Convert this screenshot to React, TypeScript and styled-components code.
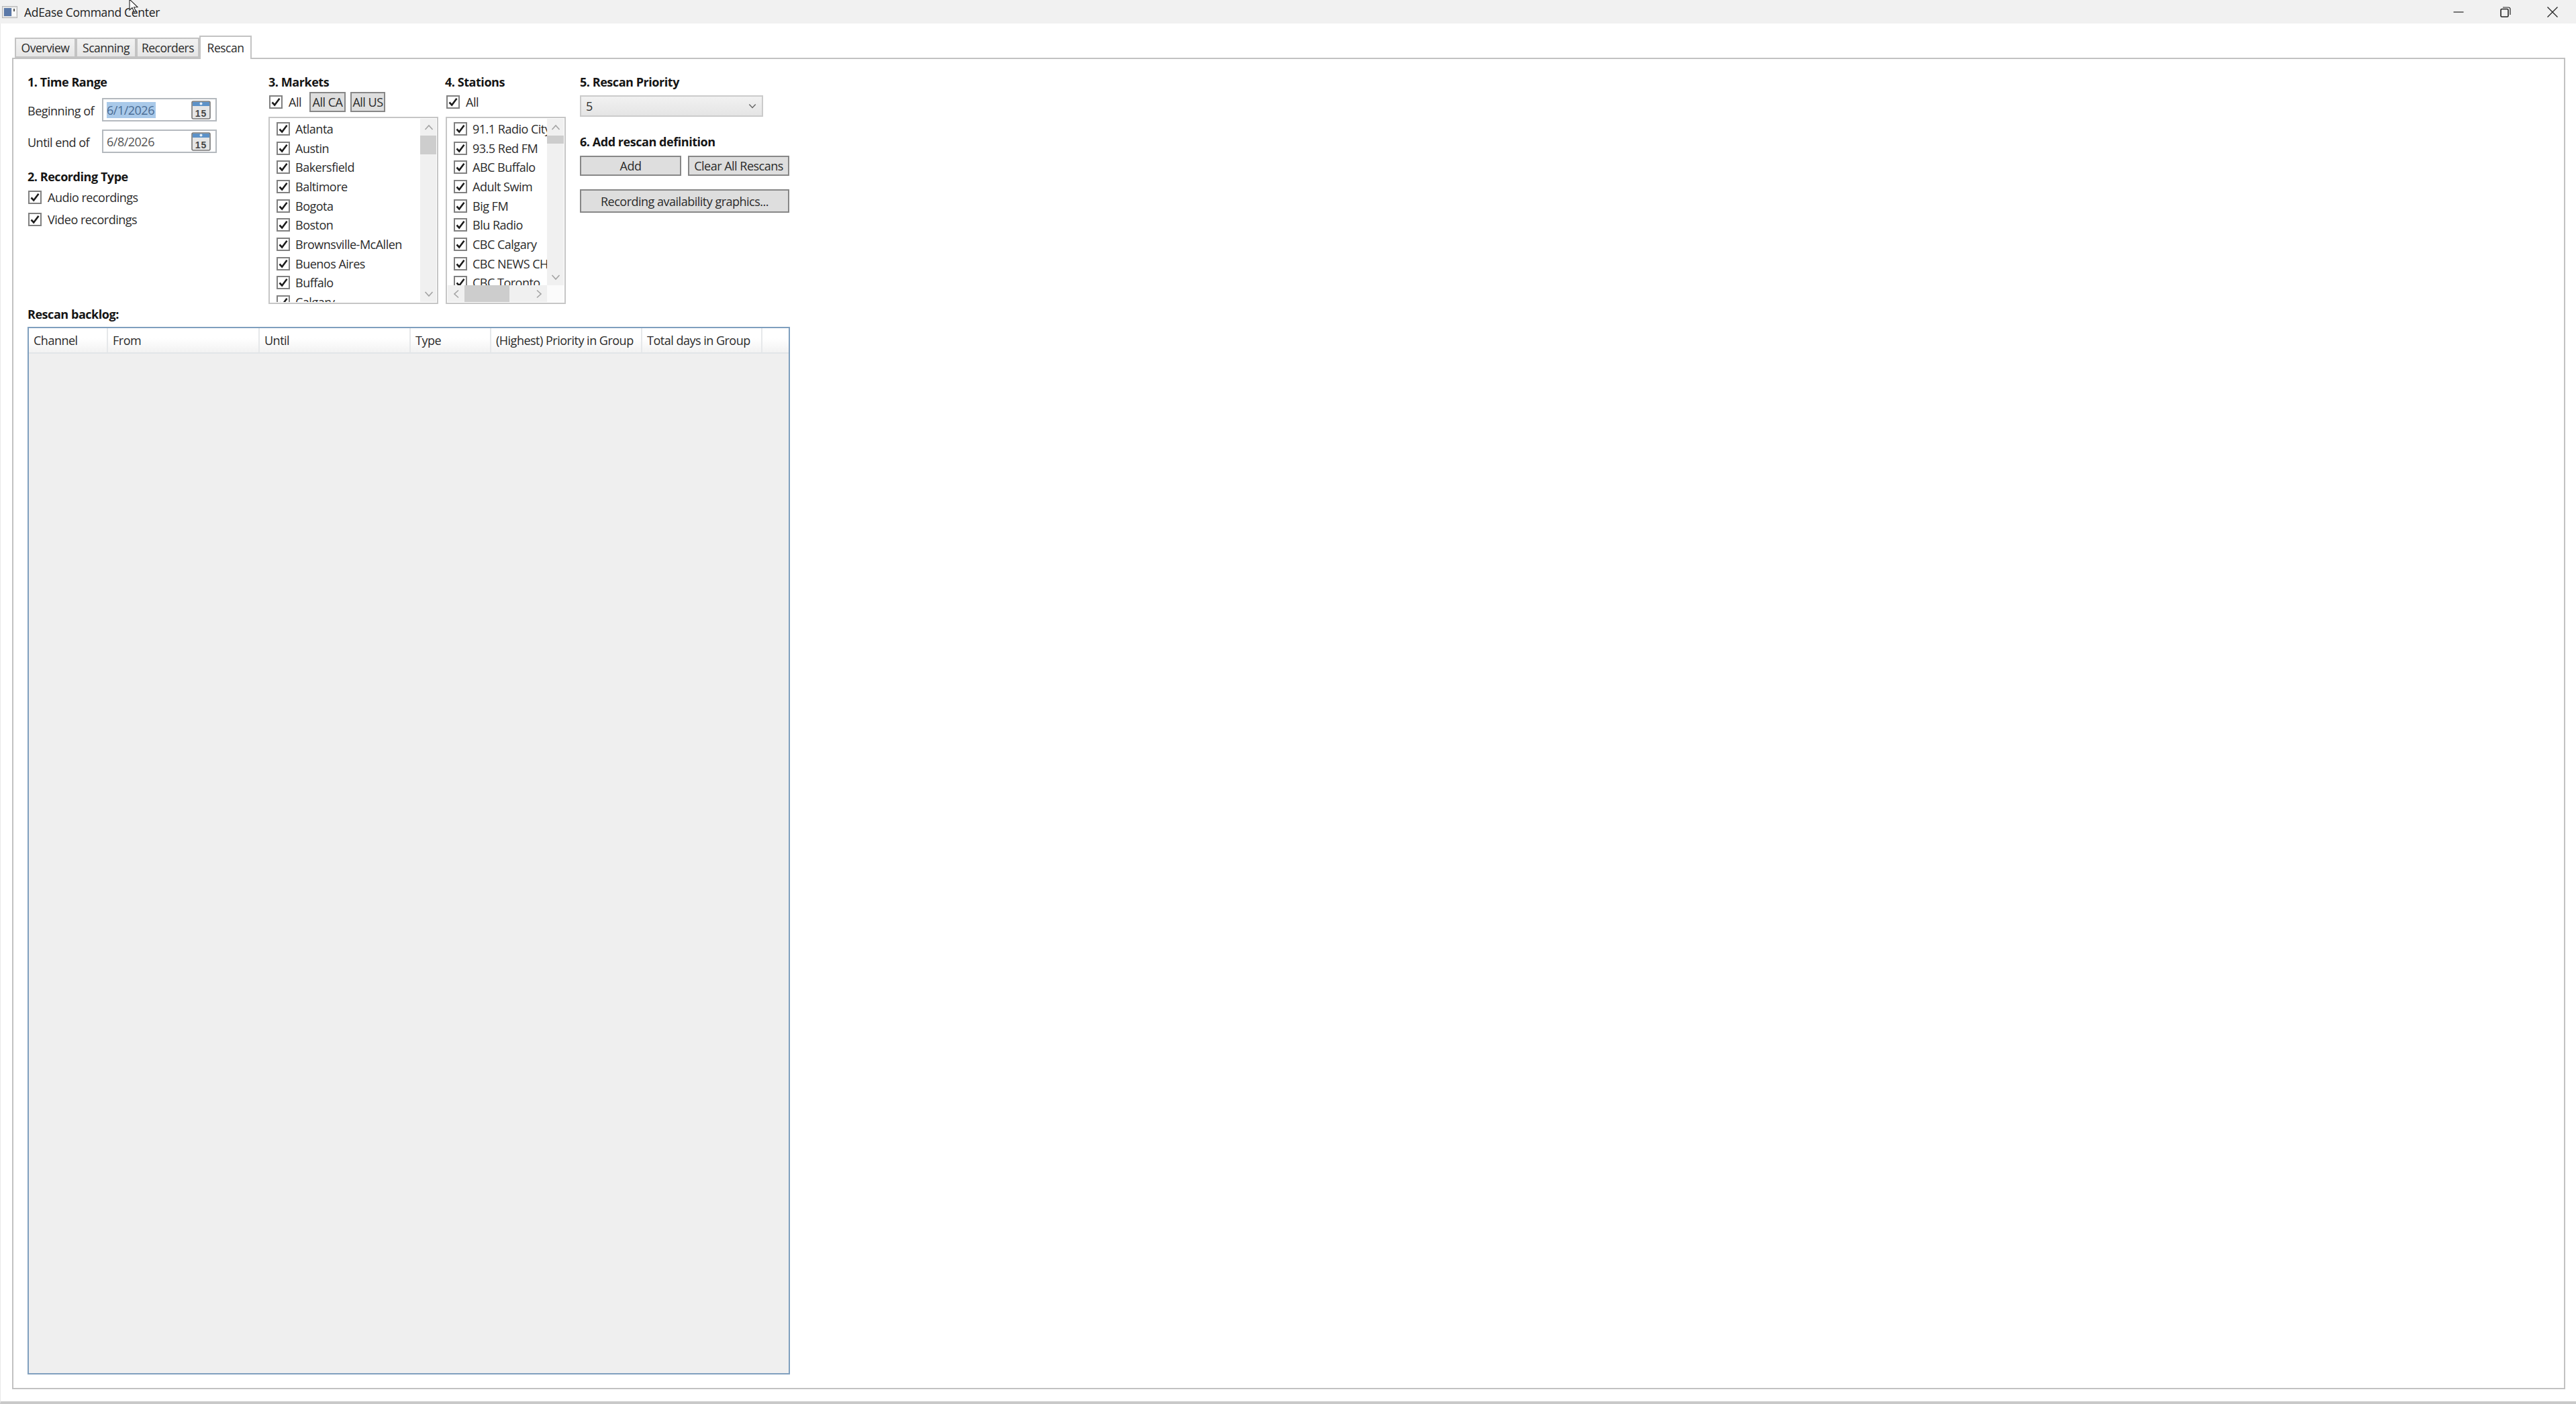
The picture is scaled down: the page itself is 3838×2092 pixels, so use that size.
import styled, { createGlobalStyle } from 'styled-components'

const GlobalStyle = createGlobalStyle`
    html, body {
        margin: 0;
        padding: 0;
        background: #fff;
    }
    * {
        box-sizing: border-box;
    }
`

const Window = styled.div`
    position: relative;
    width: 3838px;
    height: 2092px;
    display: flex;
    flex-direction: column;
    overflow: hidden;
    background: #fff;
    color: #2b2b2b;
    font-family: 'Open Sans', 'Noto Sans', sans-serif;
    font-size: 18px;
    letter-spacing: -0.5px;
`

const TitleBar = styled.div`
    height: 35px;
    flex: none;
    display: flex;
    align-items: center;
    padding-left: 3px;
    background: #f1f1f1;
    font-size: 17.5px;
    letter-spacing: -0.3px;
    color: #1c1c1c;
`

const TitleText = styled.span`
    margin-left: 10px;
    flex: 1;
`

const WindowButton = styled.div`
    width: 70px;
    height: 35px;
    display: flex;
    align-items: center;
    justify-content: center;
`

const Cursor = styled.svg`
    position: absolute;
    left: 192px;
    top: -2px;
`

const Body = styled.div`
    flex: 1;
    display: flex;
    flex-direction: column;
    padding: 18px 16px 18px 17px;
    border-left: 1px solid #e9e9e9;
    border-bottom: 4px solid #c9c9c9;
`

const TabStrip = styled.div`
    display: flex;
    align-items: flex-end;
    height: 33px;
    flex: none;
    padding-left: 4px;
    position: relative;
    z-index: 1;
`

const Tab = styled.div<{ $w: number; $active?: boolean }>`
    width: ${(p) => p.$w}px;
    height: ${(p) => (p.$active ? 35 : 30)}px;
    margin-bottom: ${(p) => (p.$active ? -2 : 0)}px;
    display: flex;
    align-items: center;
    justify-content: center;
    padding-bottom: ${(p) => (p.$active ? 2 : 0)}px;
    background: ${(p) => (p.$active ? '#fff' : 'linear-gradient(#f2f2f2, #e6e6e6)')};
    border: 2px solid #c3c3c3;
    border-bottom: ${(p) => (p.$active ? 'none' : '2px solid #c3c3c3')};
    font-size: 17.5px;
`

const Panel = styled.div`
    flex: 1;
    min-height: 0;
    display: flex;
    flex-direction: column;
    padding: 22px 0 0 21px;
    border: 2px solid #c2c2c2;
`

const TopRow = styled.div`
    display: flex;
    height: 346px;
    flex: none;
`

const Column = styled.div<{ $w: number }>`
    width: ${(p) => p.$w}px;
    flex: none;
    display: flex;
    flex-direction: column;
`

const Heading = styled.div<{ $mt?: number }>`
    height: 24px;
    line-height: 24px;
    margin-top: ${(p) => p.$mt ?? 0}px;
    font-size: 18px;
    font-weight: 700;
    letter-spacing: -0.45px;
    color: #151515;
    white-space: nowrap;
`

const DateRow = styled.div`
    display: flex;
    align-items: center;
    height: 35px;
    margin-top: 12px;
`

const DateLabel = styled.span`
    width: 111px;
    flex: none;
    padding-top: 2px;
`

const DateBox = styled.div`
    width: 171px;
    height: 35px;
    display: flex;
    align-items: center;
    justify-content: space-between;
    padding: 0 7px 0 5px;
    border: 2px solid #b4b9be;
    color: #555;
`

const DateValue = styled.span<{ $selected?: boolean }>`
    width: 73px;
    height: 24px;
    line-height: 24px;
    white-space: nowrap;
    background: ${(p) => (p.$selected ? '#a9c9e9' : 'transparent')};
    color: ${(p) => (p.$selected ? '#4a6c94' : '#555')};
`

const CheckRow = styled.div<{ $h: number; $pl?: number; $mt?: number }>`
    display: flex;
    align-items: center;
    gap: 9px;
    height: ${(p) => p.$h}px;
    margin-top: ${(p) => p.$mt ?? 0}px;
    padding-left: ${(p) => p.$pl ?? 0}px;
    white-space: nowrap;
`

const CheckBox = styled.span`
    width: 20px;
    height: 20px;
    flex: none;
    display: flex;
    align-items: center;
    justify-content: center;
    background: #fff;
    border: 2px solid #808080;
`

const AllLabel = styled.span`
    width: 31px;
    flex: none;
`

const SmallButton = styled.div<{ $w: number }>`
    width: ${(p) => p.$w}px;
    height: 30px;
    margin-right: 7px;
    flex: none;
    display: flex;
    align-items: center;
    justify-content: center;
    background: #dedede;
    border: 2px solid #878787;
    white-space: nowrap;
`

const ControlRow = styled.div`
    display: flex;
    height: 30px;
    margin-top: 3px;
    padding-left: 1px;
    align-items: center;
    gap: 0;
`

const ListBox = styled.div<{ $w: number; $ml?: number }>`
    width: ${(p) => p.$w}px;
    height: 279px;
    margin-top: 7px;
    margin-left: ${(p) => p.$ml ?? 0}px;
    padding: 1px;
    display: grid;
    border: 2px solid #c6c6c6;
    background: #fff;
`

const MarketGrid = styled(ListBox)`
    grid-template-columns: 1fr 24px;
    grid-template-rows: 1fr;
`

const StationGrid = styled(ListBox)`
    grid-template-columns: 1fr 25px;
    grid-template-rows: 1fr 25px;
`

const ListView = styled.div`
    min-width: 0;
    min-height: 0;
    overflow: hidden;
    padding: 0.65px 0 0 9px;
`

const ListRow = styled.div`
    display: flex;
    align-items: center;
    gap: 8px;
    height: 28.7px;
    white-space: nowrap;
`

const VScroll = styled.div`
    display: flex;
    flex-direction: column;
    background: #f0f0f0;
    min-height: 0;
`

const HScroll = styled.div`
    display: flex;
    background: #f0f0f0;
`

const ArrowCell = styled.div`
    width: 25px;
    height: 25px;
    flex: none;
    display: flex;
    align-items: center;
    justify-content: center;
`

const VThumb = styled.div<{ $h: number }>`
    height: ${(p) => p.$h}px;
    flex: none;
    background: #cdcdcd;
`

const HThumb = styled.div`
    width: 67px;
    height: 25px;
    flex: none;
    background: #cdcdcd;
`

const Spacer = styled.div`
    flex: 1;
`

const Corner = styled.div`
    background: #fbfbfb;
`

const Combo = styled.div`
    width: 273px;
    height: 32px;
    margin-top: 8px;
    display: flex;
    align-items: center;
    justify-content: space-between;
    padding: 0 8px 0 7px;
    background: linear-gradient(#f1f1f1, #e5e5e5);
    border: 2px solid #cbcbcb;
`

const ButtonRow = styled.div`
    display: flex;
    gap: 10px;
    margin-top: 9px;
`

const ActionButton = styled.div<{ $w: number; $h: number; $mt?: number }>`
    width: ${(p) => p.$w}px;
    height: ${(p) => p.$h}px;
    margin-top: ${(p) => p.$mt ?? 0}px;
    display: flex;
    align-items: center;
    justify-content: center;
    background: #dedede;
    border: 2px solid #878787;
    white-space: nowrap;
`

const DataGrid = styled.div`
    width: 1136px;
    height: 1561px;
    margin-top: 7px;
    flex: none;
    display: flex;
    flex-direction: column;
    background: #efefef;
    border: 2px solid #7f9fbe;
`

const HeaderRow = styled.div`
    height: 38px;
    flex: none;
    display: flex;
    background: linear-gradient(#ffffff 40%, #f2f2f2);
    border-bottom: 2px solid #e2e5e8;
`

const HeaderCell = styled.div<{ $w?: number }>`
    width: ${(p) => (p.$w ? `${p.$w}px` : 'auto')};
    flex: ${(p) => (p.$w ? 'none' : '1')};
    display: flex;
    align-items: center;
    padding-left: 7px;
    border-right: ${(p) => (p.$w ? '2px solid #e6e8ea' : 'none')};
    white-space: nowrap;
`

const Check = () => (
    <CheckBox>
        <svg width="16" height="16" viewBox="0 0 16 16">
            <path d="M2.5 8.5 L6.2 12.5 L13.5 2.8" fill="none" stroke="#1c1c1c" strokeWidth="2.6" />
        </svg>
    </CheckBox>
)

const Chevron = ({ dir, color = '#a3a3a3', size = 14 }: { dir: 'up' | 'down' | 'left' | 'right'; color?: string; size?: number }) => {
    const rotate = { up: 0, right: 90, down: 180, left: 270 }[dir]
    return (
        <svg width={size} height={size} viewBox="0 0 14 14" style={{ transform: `rotate(${rotate}deg)` }}>
            <path d="M1.5 10 L7 4 L12.5 10" fill="none" stroke={color} strokeWidth="1.6" />
        </svg>
    )
}

const AppIcon = () => (
    <svg width="23" height="18" viewBox="0 0 23 18">
        <rect x="0.5" y="0.5" width="22" height="17" fill="#e4e4e4" stroke="#b5b5b5" />
        <rect x="3" y="3" width="11" height="12" fill="#5a78a8" />
        <rect x="15" y="3" width="6" height="12" fill="#fafafa" />
        <rect x="17" y="4" width="2" height="4" fill="#555" />
    </svg>
)

const CalendarIcon = () => (
    <svg width="29" height="28" viewBox="0 0 29 28">
        <rect x="1" y="1" width="27" height="26" rx="2" fill="#e6e6e6" stroke="#777" strokeWidth="1.6" />
        <rect x="2" y="2" width="25" height="6" fill="#5d92c8" />
        <circle cx="14.5" cy="4.5" r="2" fill="#e8f0f8" />
        <text x="14.5" y="24" textAnchor="middle" fontFamily="'Liberation Sans', sans-serif" fontSize="14" fontWeight="700" fill="#444" letterSpacing="1">
            15
        </text>
    </svg>
)

const markets = ['Atlanta', 'Austin', 'Bakersfield', 'Baltimore', 'Bogota', 'Boston', 'Brownsville-McAllen', 'Buenos Aires', 'Buffalo', 'Calgary']
const stations = ['91.1 Radio City', '93.5 Red FM', 'ABC Buffalo', 'Adult Swim', 'Big FM', 'Blu Radio', 'CBC Calgary', 'CBC NEWS CH', 'CBC Toronto', 'CBC Vancouver']

const columns: { title: string; w?: number }[] = [
    { title: 'Channel', w: 118 },
    { title: 'From', w: 226 },
    { title: 'Until', w: 225 },
    { title: 'Type', w: 120 },
    { title: '(Highest) Priority in Group', w: 225 },
    { title: 'Total days in Group', w: 179 },
    { title: '' },
]

export default function App() {
    return (
        <Window>
            <GlobalStyle />
            <TitleBar>
                <AppIcon />
                <TitleText>AdEase Command Center</TitleText>
                <WindowButton>
                    <svg width="16" height="16" viewBox="0 0 16 16">
                        <path d="M0.5 8 H15.5" stroke="#222" strokeWidth="1.2" />
                    </svg>
                </WindowButton>
                <WindowButton>
                    <svg width="16" height="16" viewBox="0 0 16 16">
                        <rect x="1" y="3.5" width="11" height="11.5" rx="1.5" fill="none" stroke="#222" strokeWidth="1.6" />
                        <path d="M4 1 H12.5 A2.5 2.5 0 0 1 15 3.5 V12" fill="none" stroke="#222" strokeWidth="1.2" />
                    </svg>
                </WindowButton>
                <WindowButton>
                    <svg width="16" height="16" viewBox="0 0 16 16">
                        <path d="M0.5 0.5 L15.5 15.5 M15.5 0.5 L0.5 15.5" stroke="#222" strokeWidth="1.3" />
                    </svg>
                </WindowButton>
                <Cursor width="14" height="22" viewBox="0 0 14 22">
                    <path d="M1 1 V17 L5 13.5 L8 20 L10.5 19 L7.6 12.8 L13 12.5 Z" fill="#fff" stroke="#222" strokeWidth="1.1" />
                </Cursor>
            </TitleBar>

            <Body>
                <TabStrip>
                    <Tab $w={91}>Overview</Tab>
                    <Tab $w={90}>Scanning</Tab>
                    <Tab $w={94}>Recorders</Tab>
                    <Tab $w={78} $active>
                        Rescan
                    </Tab>
                </TabStrip>
                <Panel>
                    <TopRow>
                        <Column $w={359}>
                            <Heading>1. Time Range</Heading>
                            <DateRow>
                                <DateLabel>Beginning of</DateLabel>
                                <DateBox>
                                    <DateValue $selected>6/1/2026</DateValue>
                                    <CalendarIcon />
                                </DateBox>
                            </DateRow>
                            <DateRow>
                                <DateLabel>Until end of</DateLabel>
                                <DateBox>
                                    <DateValue>6/8/2026</DateValue>
                                    <CalendarIcon />
                                </DateBox>
                            </DateRow>
                            <Heading $mt={23}>2. Recording Type</Heading>
                            <CheckRow $h={33} $pl={1} $mt={2}>
                                <Check />
                                Audio recordings
                            </CheckRow>
                            <CheckRow $h={33} $pl={1}>
                                <Check />
                                Video recordings
                            </CheckRow>
                        </Column>

                        <Column $w={263}>
                            <Heading>3. Markets</Heading>
                            <ControlRow>
                                <CheckRow $h={30}>
                                    <Check />
                                    <AllLabel>All</AllLabel>
                                </CheckRow>
                                <SmallButton $w={54}>All CA</SmallButton>
                                <SmallButton $w={52}>All US</SmallButton>
                            </ControlRow>
                            <MarketGrid $w={253}>
                                <ListView>
                                    {markets.map((m) => (
                                        <ListRow key={m}>
                                            <Check />
                                            {m}
                                        </ListRow>
                                    ))}
                                </ListView>
                                <VScroll>
                                    <ArrowCell>
                                        <Chevron dir="up" />
                                    </ArrowCell>
                                    <VThumb $h={28} />
                                    <Spacer />
                                    <ArrowCell>
                                        <Chevron dir="down" />
                                    </ArrowCell>
                                </VScroll>
                            </MarketGrid>
                        </Column>

                        <Column $w={201}>
                            <Heading>4. Stations</Heading>
                            <ControlRow>
                                <CheckRow $h={30} $pl={1}>
                                    <Check />
                                    All
                                </CheckRow>
                            </ControlRow>
                            <StationGrid $w={179} $ml={1}>
                                <ListView>
                                    {stations.map((s) => (
                                        <ListRow key={s}>
                                            <Check />
                                            {s}
                                        </ListRow>
                                    ))}
                                </ListView>
                                <VScroll>
                                    <ArrowCell>
                                        <Chevron dir="up" />
                                    </ArrowCell>
                                    <VThumb $h={12} />
                                    <Spacer />
                                    <ArrowCell>
                                        <Chevron dir="down" />
                                    </ArrowCell>
                                </VScroll>
                                <HScroll>
                                    <ArrowCell>
                                        <Chevron dir="left" />
                                    </ArrowCell>
                                    <HThumb />
                                    <Spacer />
                                    <ArrowCell>
                                        <Chevron dir="right" />
                                    </ArrowCell>
                                </HScroll>
                                <Corner />
                            </StationGrid>
                        </Column>

                        <Column $w={312}>
                            <Heading>5. Rescan Priority</Heading>
                            <Combo>
                                5
                                <Chevron dir="down" color="#666" size={12} />
                            </Combo>
                            <Heading $mt={25}>6. Add rescan definition</Heading>
                            <ButtonRow>
                                <ActionButton $w={151} $h={30}>
                                    Add
                                </ActionButton>
                                <ActionButton $w={151} $h={30}>
                                    Clear All Rescans
                                </ActionButton>
                            </ButtonRow>
                            <ActionButton $w={312} $h={35} $mt={20}>
                                Recording availability graphics...
                            </ActionButton>
                        </Column>
                    </TopRow>

                    <Heading>Rescan backlog:</Heading>
                    <DataGrid>
                        <HeaderRow>
                            {columns.map((c) => (
                                <HeaderCell key={c.title} $w={c.w}>
                                    {c.title}
                                </HeaderCell>
                            ))}
                        </HeaderRow>
                    </DataGrid>
                </Panel>
            </Body>
        </Window>
    )
}
